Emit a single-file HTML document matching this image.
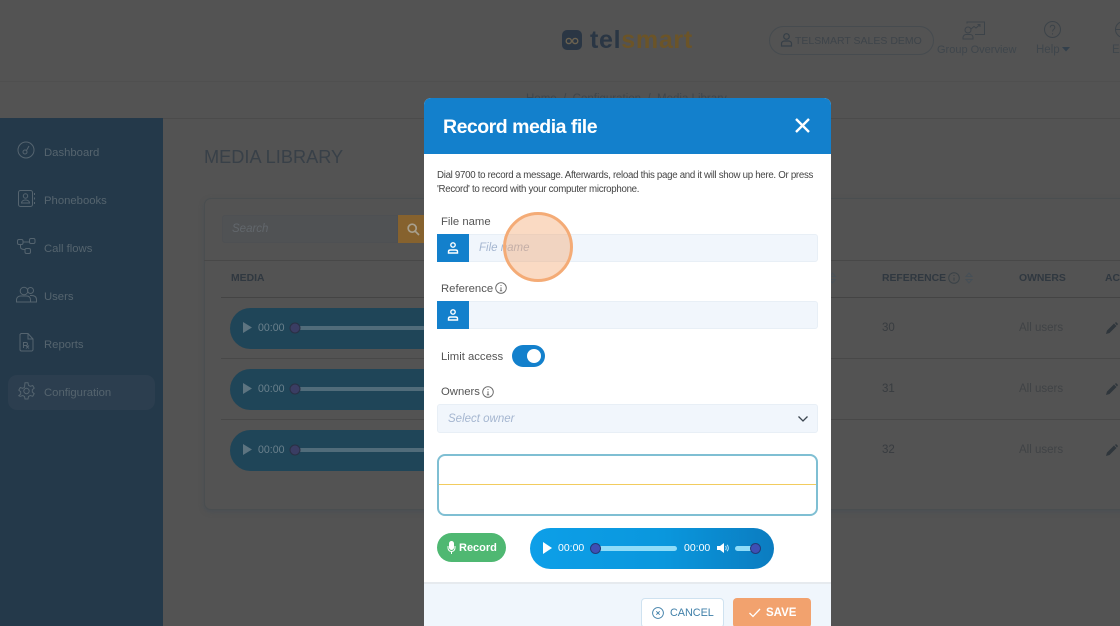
<!DOCTYPE html>
<html><head><meta charset="utf-8"><style>
*{box-sizing:border-box}
html,body{margin:0;padding:0;width:1120px;height:626px;overflow:hidden}
body{background:#535353;font-family:"Liberation Sans",sans-serif}
#root{position:relative;width:1120px;height:626px;overflow:hidden;background:#535353}
.a,.t{position:absolute}
.t{white-space:nowrap;line-height:1}
.nav{left:44px;font-size:11.300px;color:#55646e}
.pill{position:absolute;left:230px;width:200px;height:41px;border-radius:21px 0 0 21px;background:#1f4558}
.hline{position:absolute;height:1px;background:#484848}
svg{position:absolute;overflow:visible}
.lbl{font-size:11.300px;color:#555}
.th{font-size:10.400px;font-weight:700;color:#303840}
.inp{position:absolute;left:437px;width:381px;background:#f1f6fc;border:1px solid #e8eff6;border-radius:3px}
.pre{position:absolute;left:437px;width:32px;background:#1380cc}
</style></head><body><div id="root">
<!-- top -->
<div class="a" style="left:0;top:81px;width:1120px;height:1px;background:#4f4f4f"></div>
<div class="a" style="left:0;top:118px;width:1120px;height:1px;background:#4b4b4b"></div>
<div class="a" style="left:562px;top:30px;width:20px;height:20px;border-radius:5px;background:#2a3644"></div>
<svg style="left:562px;top:30px" width="20" height="20" fill="none" stroke="#6b6250" stroke-width="1.400"><circle cx="6.800" cy="11" r="2.600"/><circle cx="13.200" cy="11" r="2.600"/></svg>
<div class="t" style="left:590px;top:28px;font-size:25px;font-weight:700;color:#2a3644;letter-spacing:.7px">tel<span style="color:#6b5428">smart</span></div>
<div class="a" style="left:769px;top:26px;width:165px;height:29px;border:1px solid #464b4f;border-radius:15px"></div>
<svg style="left:780px;top:33px" width="13" height="14" fill="none" stroke="#363f47" stroke-width="1.200"><circle cx="6.500" cy="3.500" r="2.800"/><path d="M1.500 13V10.500C1.500 9 3 8 4.500 8h4c1.500 0 3 1 3 2.500V13z"/></svg>
<div class="t" style="left:795px;top:36px;font-size:10.500px;color:#3e444a">TELSMART SALES DEMO</div>
<svg style="left:962px;top:21px" width="24" height="19" fill="none" stroke="#3c4349" stroke-width="1"><path d="M5 2.500V1h17.500v12.500H13"/><path d="M9 8l3-2.500 2 1.500 4-3.500M15.500 3.500H18V6"/><circle cx="6" cy="9" r="3"/><path d="M1 18v-1.500C1 14.500 3 13.500 4 13.500h4c1.500 0 3 1 3 3V18z"/></svg>
<div class="t" style="left:937px;top:45px;font-size:11px;color:#3f464c">Group Overview</div>
<svg style="left:1044px;top:21px" width="17" height="17" fill="none" stroke="#3c4349" stroke-width="1"><circle cx="8.500" cy="8.500" r="8"/><path d="M6.200 6.500c0-3 4.600-3 4.600 0 0 2-2.300 1.800-2.300 4M8.500 12.200v1.300"/></svg>
<div class="t" style="left:1036px;top:45px;font-size:11.500px;color:#3f464c">Help</div>
<svg style="left:1062px;top:47px" width="8" height="5"><path d="M0 0h8L4 4.500z" fill="#33404c"/></svg>
<svg style="left:1115px;top:21px" width="17" height="17" fill="none" stroke="#3c4349" stroke-width="1"><circle cx="8.500" cy="8.500" r="8"/><path d="M.5 8.500h16"/></svg>
<div class="t" style="left:1112px;top:45px;font-size:11.500px;color:#3f464c">EN</div>
<div class="t" style="left:526px;top:94px;font-size:11.500px;color:#3f464c">Home &nbsp;/&nbsp; Configuration &nbsp;/&nbsp; Media Library</div>

<!-- sidebar -->
<div class="a" style="left:0;top:118px;width:163px;height:508px;background:#24394a"></div>
<div class="a" style="left:8px;top:375px;width:147px;height:35px;border-radius:9px;background:#2c3e4f"></div>
<svg style="left:17px;top:141px" width="18" height="18" fill="none" stroke="#55646f" stroke-width="1"><circle cx="9" cy="9" r="8"/><circle cx="8" cy="11" r="2"/><path d="M9.500 9.500L12 5M4 8h.1M6 5h.1M9 3.500h.1M14 8h.1"/></svg>
<div class="t nav" style="top:148px">Dashboard</div>
<svg style="left:18px;top:190px" width="18" height="18" fill="none" stroke="#55646f" stroke-width="1"><rect x=".5" y=".5" width="14" height="16" rx="2"/><circle cx="7.500" cy="6" r="2.200"/><path d="M3.500 13c0-4 8-4 8 0zM16.500 3v2M16.500 7.500v2M16.500 12v2"/></svg>
<div class="t nav" style="top:196px">Phonebooks</div>
<svg style="left:17px;top:238px" width="19" height="16" fill="none" stroke="#55646f" stroke-width="1"><rect x=".5" y="1.500" width="5.500" height="5" rx="1.500"/><rect x="12.500" y=".5" width="5.500" height="5" rx="1.500"/><rect x="8" y="10.500" width="5.500" height="5" rx="1.500"/><path d="M6 4h6.500M3.500 6.500V9c0 2 1.500 2.500 4.500 2.500"/></svg>
<div class="t nav" style="top:244px">Call flows</div>
<svg style="left:16px;top:286px" width="21" height="17" fill="none" stroke="#55646f" stroke-width="1"><circle cx="8" cy="5" r="3.800"/><circle cx="14.500" cy="4.500" r="3"/><path d="M.5 16v-2c0-3 2.500-4 4-4h6c2 0 4 1 4 4v2zM14 9.500h2c2.500 0 4.500 1.500 4.500 4V16h-6"/></svg>
<div class="t nav" style="top:292px">Users</div>
<svg style="left:19px;top:333px" width="15" height="19" fill="none" stroke="#55646f" stroke-width="1"><path d="M2 .5h7l5 5.500v10.500a1.500 1.500 0 0 1-1.500 1.500h-10A1.500 1.500 0 0 1 1 16.500V1.500zM9 .5V6h5"/><path d="M4.500 15V9.500h2.500c2 0 2 3 0 3H4.500M7 12.500l3 3M10 12.500l-3 3"/></svg>
<div class="t nav" style="top:340px">Reports</div>
<svg style="left:18px;top:382px" width="17" height="18" fill="none" stroke="#55646f" stroke-width="1"><path d="M7 .8h3l.5 2.500 1.800 1 2.400-.8 1.500 2.600-1.900 1.700v2.200l1.900 1.700-1.500 2.600-2.400-.8-1.800 1-.5 2.500H7l-.5-2.500-1.800-1-2.400.8L.8 13.700l1.900-1.700V9.800L.8 8.100l1.500-2.600 2.400.8 1.800-1z"/><circle cx="8.500" cy="9" r="2.700"/></svg>
<div class="t nav" style="top:388px">Configuration</div>

<!-- content -->
<div class="t" style="left:204px;top:148px;font-size:18.200px;color:#384048">MEDIA LIBRARY</div>
<div class="a" style="left:204px;top:198px;width:930px;height:312px;background:#535353;border:1px solid #4a4e50;border-radius:7px;box-shadow:0 2px 5px #4a4f54"></div>
<div class="a" style="left:222px;top:215px;width:176px;height:28px;background:#505254;border:1px solid #4e5053;border-radius:3px 0 0 3px"></div>
<div class="t" style="left:232px;top:224px;font-size:11.500px;font-style:italic;color:#62676c">Search</div>
<div class="a" style="left:398px;top:215px;width:26px;height:28px;background:#86622e"></div>
<svg style="left:407px;top:223px" width="13" height="13" fill="none" stroke="#a8a08e" stroke-width="1.700"><circle cx="5.200" cy="5.200" r="4"/><path d="M8 8l4 4"/></svg>
<div class="hline" style="left:204px;top:260px;width:930px"></div>
<div class="t th" style="left:231px;top:274px">MEDIA</div>
<div class="hline" style="left:221px;top:297px;width:899px;background:#444"></div>
<div class="pill" style="top:308px"></div><div class="pill" style="top:369px"></div><div class="pill" style="top:430px"></div>
<div class="hline" style="left:221px;top:358px;width:899px"></div>
<div class="hline" style="left:221px;top:419px;width:899px"></div>
<svg style="left:243px;top:308px" width="190" height="163">
 <g fill="#5d7480"><path d="M0 14l9 5.500-9 5.500z"/><path d="M0 75l9 5.500-9 5.500z"/><path d="M0 136l9 5.500-9 5.500z"/></g>
 <g fill="#516c7a"><rect x="52" y="18" width="130" height="4" rx="2"/><rect x="52" y="79" width="130" height="4" rx="2"/><rect x="52" y="140" width="130" height="4" rx="2"/></g>
 <g fill="#3a3d63" stroke="#2a3044"><circle cx="52" cy="20" r="5"/><circle cx="52" cy="81" r="5"/><circle cx="52" cy="142" r="5"/></g>
</svg>
<div class="t" style="left:258px;top:323px;font-size:10.600px;color:#6a808c">00:00</div>
<div class="t" style="left:258px;top:384px;font-size:10.600px;color:#6a808c">00:00</div>
<div class="t" style="left:258px;top:445px;font-size:10.600px;color:#6a808c">00:00</div>
<svg style="left:829px;top:272px" width="7" height="12" fill="none" stroke="#4a5258"><path d="M.5 4.500L3.500 1l3 3.500zM.5 7.500l3 3.500 3-3.500z"/></svg>
<div class="t th" style="left:882px;top:274px">REFERENCE</div>
<svg style="left:948px;top:272px" width="12" height="12" fill="none" stroke="#3a4247"><circle cx="6" cy="6" r="5.300"/><path d="M6 5.500v3.200M6 3v1"/></svg>
<svg style="left:965px;top:272px" width="8" height="12" fill="none" stroke="#464f56"><path d="M1 4.500L4 1l3 3.500zM1 7.500l3 3.500 3-3.500z"/></svg>
<div class="t th" style="left:1019px;top:274px">OWNERS</div>
<div class="t th" style="left:1105px;top:274px">ACTIONS</div>
<div class="t" style="left:882px;top:323px;font-size:11.500px;color:#383c40">30</div>
<div class="t" style="left:882px;top:384px;font-size:11.500px;color:#383c40">31</div>
<div class="t" style="left:882px;top:445px;font-size:11.500px;color:#383c40">32</div>
<div class="t" style="left:1019px;top:323px;font-size:11.500px;color:#404346">All users</div>
<div class="t" style="left:1019px;top:384px;font-size:11.500px;color:#404346">All users</div>
<div class="t" style="left:1019px;top:445px;font-size:11.500px;color:#404346">All users</div>
<svg style="left:1106px;top:322px" width="12" height="140" fill="#2f363c"><path d="M0 12l1-3.500L8 1.500l2.500 2.500-7 7z M9 1l1-1 2 2-1 1.500z"/><path d="M0 73l1-3.500 7-7 2.500 2.500-7 7z M9 62l1-1 2 2-1 1.500z"/><path d="M0 134l1-3.500 7-7 2.500 2.500-7 7z M9 123l1-1 2 2-1 1.500z"/></svg>

<!-- modal -->
<div class="a" style="left:424px;top:98px;width:407px;height:528px;background:#fff;border-radius:7px 7px 0 0;overflow:hidden">
 <div class="a" style="left:0;top:0;width:407px;height:56px;background:#1380cc"></div>
 <div class="a" style="left:0;top:484px;width:407px;height:44px;background:#f0f6fc;border-top:2px solid #e6eaee"></div>
</div>
<div class="t" style="left:443px;top:118px;font-size:19.500px;font-weight:700;color:#fff;letter-spacing:-.5px">Record media file</div>
<svg style="left:795px;top:118px" width="15" height="15" stroke="#fff" stroke-width="2.400"><path d="M1 1l13 13M14 1L1 14"/></svg>
<div class="t" style="left:437px;top:171px;font-size:9.700px;color:#444;letter-spacing:-.29px">Dial 9700 to record a message. Afterwards, reload this page and it will show up here. Or press</div>
<div class="t" style="left:437px;top:185px;font-size:9.700px;color:#444;letter-spacing:-.29px">'Record' to record with your computer microphone.</div>

<div class="t lbl" style="left:441px;top:217px">File name</div>
<div class="inp" style="top:234px;height:28px"></div>
<div class="pre" style="top:234px;height:28px"></div>
<svg style="left:447px;top:242px" width="12" height="12" fill="none" stroke="#fff" stroke-width="1.400"><circle cx="6" cy="3" r="2.200"/><path d="M1.500 11V9.500C1.500 8.500 2.500 8 3.500 8h5c1 0 2 .5 2 1.500V11z"/></svg>
<div class="t" style="left:479px;top:243px;font-size:11.500px;font-style:italic;color:#a5b6d0">File name</div>

<div class="t lbl" style="left:441px;top:284px">Reference</div>
<svg style="left:495px;top:282px" width="12" height="12" fill="none" stroke="#666" stroke-width=".9"><circle cx="6" cy="6" r="5.300"/><path d="M6 5.300v3.500M4.800 8.800h2.400M6 3v1"/></svg>
<div class="inp" style="top:301px;height:28px"></div>
<div class="pre" style="top:301px;height:28px"></div>
<svg style="left:447px;top:309px" width="12" height="12" fill="none" stroke="#fff" stroke-width="1.400"><circle cx="6" cy="3" r="2.200"/><path d="M1.500 11V9.500C1.500 8.500 2.500 8 3.500 8h5c1 0 2 .5 2 1.500V11z"/></svg>

<div class="t lbl" style="left:441px;top:352px">Limit access</div>
<div class="a" style="left:512px;top:345px;width:33px;height:22px;border-radius:11px;background:#1380cc"></div>
<div class="a" style="left:527px;top:349px;width:14px;height:14px;border-radius:50%;background:#fff"></div>

<div class="t lbl" style="left:441px;top:387px">Owners</div>
<svg style="left:482px;top:386px" width="12" height="12" fill="none" stroke="#666" stroke-width=".9"><circle cx="6" cy="6" r="5.300"/><path d="M6 5.300v3.500M4.800 8.800h2.400M6 3v1"/></svg>
<div class="inp" style="top:404px;height:29px"></div>
<div class="t" style="left:448px;top:414px;font-size:11.500px;font-style:italic;color:#a5b6d0">Select owner</div>
<svg style="left:798px;top:416px" width="10" height="6" fill="none" stroke="#3c4650" stroke-width="1.300"><path d="M.5.500L5 5 9.500.5"/></svg>

<div class="a" style="left:437px;top:454px;width:381px;height:62px;background:#fff;border:2px solid #7fbfd3;border-radius:8px"></div>
<div class="a" style="left:439px;top:484px;width:377px;height:1px;background:#f2cc5e"></div>

<div class="a" style="left:437px;top:533px;width:69px;height:29px;border-radius:15px;background:#4fb872"></div>
<svg style="left:447px;top:541px" width="9" height="14" fill="#fff"><rect x="2" y="0" width="5" height="9" rx="2.500"/><path d="M1 5v2a3.500 3.500 0 0 0 7 0V5" fill="none" stroke="#fff"/><rect x="4" y="10" width="1" height="3"/></svg>
<div class="t" style="left:459px;top:543px;font-size:11px;font-weight:700;color:#fff">Record</div>

<div class="a" style="left:530px;top:528px;width:244px;height:41px;border-radius:21px;background:linear-gradient(90deg,#0d9fe8 0%,#0a97dd 55%,#0b7cc0 100%)"></div>
<svg style="left:543px;top:542px" width="9" height="12"><path d="M0 0l9 6-9 6z" fill="#fff"/></svg>
<div class="t" style="left:558px;top:543px;font-size:10.500px;color:#fff">00:00</div>
<div class="a" style="left:595px;top:546px;width:82px;height:5px;border-radius:2.500px;background:#8fdcf8"></div>
<div class="a" style="left:590px;top:543px;width:11px;height:11px;border-radius:50%;background:#3e4fb5;border:1px solid #243a78"></div>
<div class="t" style="left:684px;top:543px;font-size:10.500px;color:#fff">00:00</div>
<svg style="left:717px;top:543px" width="12" height="10" fill="#fff"><path d="M0 3h3l4-3v10L3 7H0z"/><path d="M8.500 3c1 1 1 3 0 4M10 1.800c1.800 1.800 1.800 4.600 0 6.400" fill="none" stroke="#bfe8fa"/></svg>
<div class="a" style="left:735px;top:546px;width:20px;height:5px;border-radius:2.500px;background:#8fdcf8"></div>
<div class="a" style="left:750px;top:543px;width:11px;height:11px;border-radius:50%;background:#3e4fb5;border:1px solid #243a78"></div>

<div class="a" style="left:641px;top:598px;width:83px;height:30px;background:#fff;border:1px solid #cfe2f0;border-radius:4px"></div>
<svg style="left:652px;top:607px" width="12" height="12" fill="none" stroke="#3f7fa8" stroke-width=".9"><circle cx="6" cy="6" r="5.400"/><path d="M4.300 4.300l3.400 3.400M7.700 4.300L4.300 7.700"/></svg>
<div class="t" style="left:670px;top:608px;font-size:10.800px;color:#3f7fa8">CANCEL</div>
<div class="a" style="left:733px;top:598px;width:78px;height:30px;background:#f2a26e;border-radius:4px"></div>
<svg style="left:749px;top:608px" width="12" height="10" fill="none" stroke="#fff" stroke-width="1.300"><path d="M.5 5l3.500 3.500L11 1"/></svg>
<div class="t" style="left:766px;top:608px;font-size:11.500px;font-weight:700;color:#fff">SAVE</div>

<!-- click highlight -->
<div class="a" style="left:503px;top:212px;width:70px;height:70px;border-radius:50%;border:3px solid #f4ab76;background:rgba(243,163,105,.4)"></div>
</div></body></html>
